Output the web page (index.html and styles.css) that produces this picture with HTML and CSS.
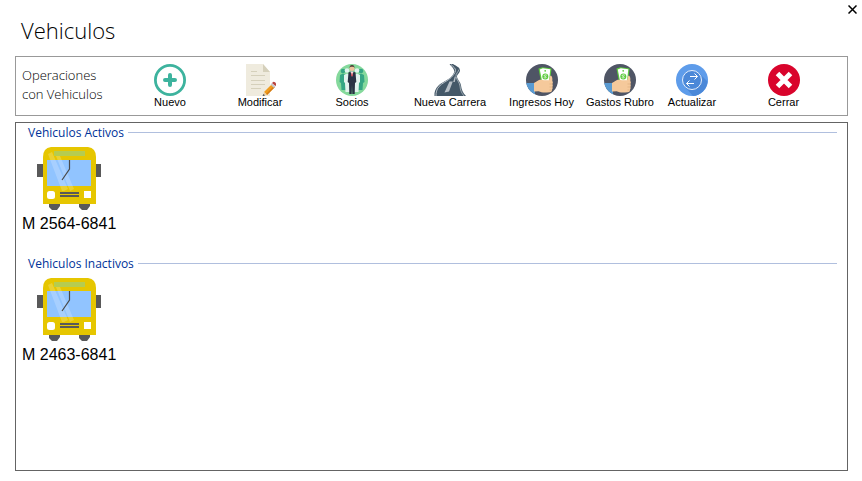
FILE: index.html
```html
<!DOCTYPE html>
<html lang="es">
<head>
<meta charset="utf-8">
<title>Vehiculos</title>
<link rel="stylesheet" href="styles.css">
</head>
<body>
<svg class="defs" aria-hidden="true">
  <symbol id="bus" viewBox="0 0 64 64">
    <path fill="#595959" d="M0 17h6v13H0zM58 17h6v13h-6zM12 56h11v3l-3 4h-5l-3-3zM42 56h11v3l-3 4h-5l-3-3z"/>
    <path fill="#e6c600" d="M14 0h37q8 1 8 10v47H6V10Q6 1 14 0z"/>
    <path fill="#b5cc50" d="M17 4h31v5H17z"/>
    <path fill="#91c4ff" d="M10 13h44v26H10z"/>
    <path fill="#fff" fill-opacity=".2" d="M11 7l4-2 16 37-4 2h-2zM19 9h4l14 33-4 2z"/>
    <path fill="none" stroke="#494949" stroke-width="1.200" d="M32.500 13v9L25 33"/>
    <rect x="10" y="44" width="8" height="8" rx="2.500" fill="#fff"/>
    <path fill="#fff" d="M47 44h7v7h-7z"/>
    <path fill="#595959" d="M23 45h19v2H23zM23 48h19v2H23z"/>
  </symbol>
  <symbol id="cash" viewBox="0 0 32 32">
    <clipPath id="disc"><circle cx="16" cy="16" r="16"/></clipPath>
    <g clip-path="url(#disc)">
      <path fill="#4f5565" d="M0 0h32v32H0z"/>
      <path fill="#5a9bd2" d="M0 19h9v13H0z"/>
      <path fill="#5ccb3d" d="M12.500 4.500l4-1.200 9 1.200L24 18h-9z"/>
      <path fill="#fff" d="M13.800 5.500l3-1.200 7.500 1L23 17h-7z"/>
      <circle cx="19.200" cy="6.800" r=".9" fill="#5ccb3d"/>
      <circle cx="19.300" cy="12.500" r="3" fill="#5ccb3d"/>
      <path fill="none" stroke="#fff" stroke-width=".8" d="M20.800 11.200c-2-.8-3 0-2.500.8s2 .4 2 1.200-1.400 1-2.500.4"/>
      <path fill="#f5c99b" d="M8 19l5-3c2-.7 3.500 0 5 .2h5c1-1 .5-3 1.300-4.500 1.800-.4 2.300 2.400 2 5.300.8 1 .7 2 0 3 .8 1 .5 2 0 3 .6 1 .3 2-.4 2.800.4 1.500-.6 2.500-2.300 2.500-5 .4-8 .5-11-1L8 27.500z"/>
      <path fill="none" stroke="#d9a878" stroke-width=".6" d="M23.500 20h3M23.500 23h3M23.500 26h2"/>
    </g>
  </symbol>
</svg>

<header class="titlebar">
  <h1 class="title">Vehiculos</h1>
  <button class="close" type="button" aria-label="Cerrar ventana">
    <svg viewBox="0 0 9 9"><path fill="none" stroke="#000" stroke-width="1.500" d="M.5.500l8 8M8.500.500l-8 8"/></svg>
  </button>
</header>

<nav class="toolbar">
  <p class="caption">Operaciones<br>con Vehiculos</p>
  <button class="tool" type="button">
    <svg class="icon" viewBox="0 0 32 32"><circle cx="16" cy="16" r="14.600" fill="none" stroke="#3db39e" stroke-width="2.800"/><path fill="none" stroke="#3db39e" stroke-width="4" stroke-linecap="round" stroke-linejoin="round" d="M11 16h10M16 11v10"/></svg>
    <span>Nuevo</span>
  </button>
  <button class="tool" type="button">
    <svg class="icon" viewBox="0 0 32 32">
      <path fill="#efebde" d="M2 0h17l7 8v24H2z"/>
      <path fill="#d5d0bb" d="M19 0l7 8h-7z"/>
      <path stroke="#d5d0bb" stroke-width="1" d="M7 7.500h6M7 11.500h14M7 16.500h14M7 20.500h14M7 24.500h10"/>
      <path fill="#ef9c1f" d="M20 28l8-8 3 3-8 8z"/>
      <path fill="#d37a15" d="M22 30l8-8 1 1-8 8z"/>
      <path fill="#c8c8cc" d="M26.500 20.500l1.500-1.500 3.500 3.500-1.500 1.500z"/>
      <path fill="#b9423f" d="M28 19l1.500-1.200q3 .7 3 3L31.500 22z"/>
      <path fill="#edd0a2" d="M20 28l3 3-4 1z"/><path fill="#354052" d="M19.500 30l1.500 1.500-2.500.5z"/>
    </svg>
    <span>Modificar</span>
  </button>
  <button class="tool" type="button">
    <svg class="icon" viewBox="0 0 32 32">
      <circle cx="16" cy="16" r="16" fill="#85d99c"/>
      <g fill="#35a684"><circle cx="7" cy="7" r="2.300"/><path d="M4 11l3-1.500 3 1.500v15H5.500L5 19l-1.500-1z"/><circle cx="25" cy="7" r="2.300"/><path d="M28 11l-3-1.500-3 1.500v15h4.500l.5-7 1.500-1z"/></g>
      <g fill="#e2f3ee"><circle cx="11" cy="6.500" r="2.300"/><path d="M8 11l3-1.500 3 1.500v17H9.500L9 19l-1-1z"/><circle cx="21" cy="6.500" r="2.300"/><path d="M24 11l-3-1.500-3 1.500v17h4.500l.5-9 1-1z"/></g>
      <circle cx="16" cy="4.500" r="2.500" fill="#eec29c"/><path fill="#4a3b34" d="M13.500 4q0-3 2.500-3t2.500 3l-1-1.200h-3z"/>
      <path fill="#2a3244" d="M12.500 8.500l2.500-1h2l2.500 1 .8 9.500-1.300 1-.3 11h-2.400L16 21l-.3 9h-2.400L13 19l-1.300-1z"/>
      <path fill="#fff" d="M14.500 7.500h3L16 13z"/><path fill="#d33e4b" d="M15.600 8.500h.8l.4 3-.8 1-.8-1z"/>
    </svg>
    <span>Socios</span>
  </button>
  <button class="tool" type="button">
    <svg class="icon" viewBox="0 0 32 32">
      <path fill="#445868" d="M15.500 0H19c3 2 6.500 3 7 6 .3 2.500-3 4.500-3 6.500 0 3 3.500 5 4 9 .5 4 2 7.500 5 10.500H.5c-.5-4 1-8 4.500-11 4-3.500 9.500-5 12.500-8.500 2-2.500 3.500-4.500 2.500-6.500-1-2.500-3-4-4.500-6z"/>
      <path fill="none" stroke="#b8c0c7" stroke-width="1" d="M17 .5c2 2 5 4 4.500 6.200-.5 2.500-2.500 5-4.500 7C13.500 17 8 19 5 22.500 2.500 25.500 2 28.500 2 32"/>
      <path fill="none" stroke="#b8c0c7" stroke-width=".8" d="M25 5.500c-.5 2.500-3.500 4-3 7 .5 3.500 3.500 5.500 4 9.500.3 4 1.500 7 4 10"/>
      <path fill="#b8c0c7" d="M20.800 12.500l1 .5-1 5h-1.600zM15.500 17.500h3.300l-3.800 10-4.500 1z"/>
    </svg>
    <span>Nueva Carrera</span>
  </button>
  <button class="tool" type="button">
    <svg class="icon"><use href="#cash"/></svg>
    <span>Ingresos Hoy</span>
  </button>
  <button class="tool" type="button">
    <svg class="icon"><use href="#cash"/></svg>
    <span>Gastos Rubro</span>
  </button>
  <button class="tool" type="button">
    <svg class="icon" viewBox="0 0 32 32">
      <circle cx="16" cy="16" r="16" fill="#5e9cea"/>
      <path fill="#4b88d8" d="M23 9l8.500 8.500A16 16 0 0 1 17 32l-8-9z"/>
      <circle cx="16" cy="16" r="9.500" fill="#4b88d8" stroke="#e6effb" stroke-width="1"/>
      <path fill="none" stroke="#fff" stroke-width="1" d="M14 12.500h7.500M18.500 9.500l3 3-3 3M18 19.500h-7.500M13.500 16.500l-3 3 3 3"/>
    </svg>
    <span>Actualizar</span>
  </button>
  <button class="tool" type="button">
    <svg class="icon" viewBox="0 0 32 32"><circle cx="16" cy="16" r="16" fill="#d9042c"/><path fill="none" stroke="#fff" stroke-width="5" d="M9.500 9.500l13 13M22.500 9.500l-13 13"/></svg>
    <span>Cerrar</span>
  </button>
</nav>

<main class="panel">
  <section class="group">
    <h2 class="heading">Vehiculos Activos</h2>
    <button class="vehicle" type="button">
      <svg class="bus"><use href="#bus"/></svg>
      <span>M 2564-6841</span>
    </button>
  </section>
  <section class="group">
    <h2 class="heading">Vehiculos Inactivos</h2>
    <button class="vehicle" type="button">
      <svg class="bus"><use href="#bus"/></svg>
      <span>M 2463-6841</span>
    </button>
  </section>
</main>
</body>
</html>
```
FILE: styles.css
```css
* {
  box-sizing: border-box;
}

body {
  margin: 0;
  min-height: 100vh;
  padding: 0 14px 10px 15px;
  display: flex;
  flex-direction: column;
  background: #fff;
  color: #000;
  font-family: "Liberation Sans", Arial, sans-serif;
}

button {
  padding: 0;
  border: 0;
  background: none;
  color: inherit;
  font-family: inherit;
}

.defs {
  position: absolute;
  width: 0;
  height: 0;
}

.titlebar {
  height: 56px;
  display: flex;
  justify-content: space-between;
  align-items: flex-start;
}

.title {
  margin: 14px 0 0 6px;
  font: 300 22px/32px "Open Sans", "Noto Sans", sans-serif;
}

.close {
  width: 18px;
  height: 18px;
  margin-right: -13px;
  display: grid;
  place-items: center;
}

.close svg {
  width: 9px;
  height: 9px;
}

.toolbar {
  height: 60px;
  padding: 7px 6px 0;
  display: grid;
  grid-template-columns: 103fr 90fr 90fr 94fr 102fr 81fr 76fr 68fr 115fr;
  border: 1px solid #999;
}

.caption {
  margin: 2px 0 0;
  font: 300 13px/19px "Open Sans", "Noto Sans", sans-serif;
  white-space: nowrap;
}

.tool {
  display: flex;
  flex-direction: column;
  align-items: center;
  font-size: 11px;
  line-height: 12px;
  white-space: nowrap;
}

.icon {
  width: 32px;
  height: 32px;
}

.panel {
  flex: 1;
  margin-top: 6px;
  padding: 1px 10px 0 6px;
  border: 1px solid #646464;
}

.group {
  height: 131px;
}

.heading {
  margin: 0 0 6px 6px;
  display: flex;
  align-items: center;
  gap: 4px;
  color: #039;
  font: 400 12px/17px "Open Sans", "Noto Sans", sans-serif;
}

.heading::after {
  content: "";
  flex: 1;
  height: 1px;
  background: #b0bfde;
}

.vehicle {
  display: flex;
  flex-direction: column;
  align-items: center;
  gap: 3px;
  font-size: 16px;
  line-height: 20px;
}

.bus {
  width: 64px;
  height: 64px;
}
```
